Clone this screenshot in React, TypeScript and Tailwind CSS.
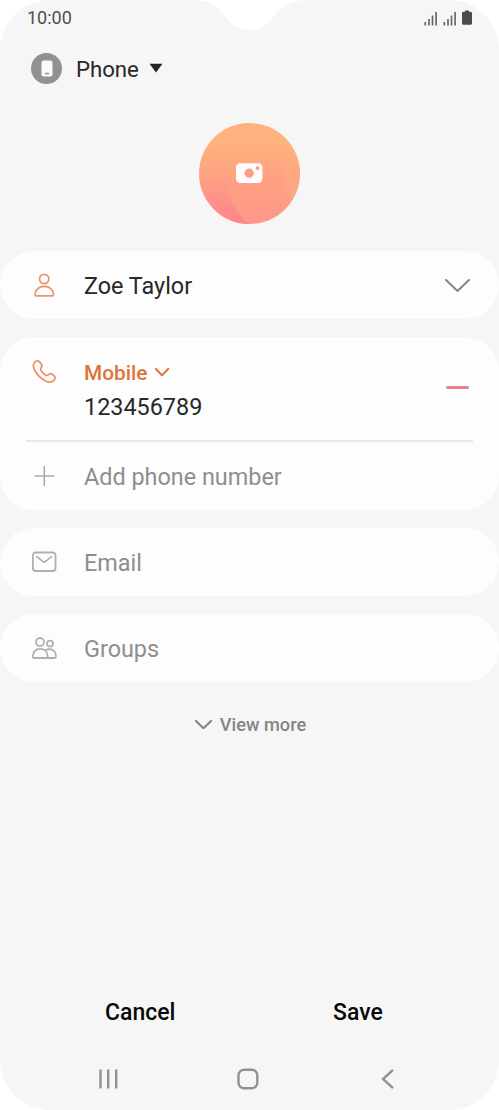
import React from "react";

interface IconProps {
  className?: string;
}

const SignalIcon = () => (
  <svg width="14" height="15" viewBox="0 0 14 15" fill="none" stroke="#606060" strokeWidth="1.6">
    <path d="M1.3 11v3.5M5 8v6.5M8.5 4.5v10M12.1 1v13.5" />
  </svg>
);

const BatteryIcon = () => (
  <svg className="mb-px" width="10" height="15" viewBox="0 0 10 15" fill="#4c4c4c">
    <path d="M3 0.5h4v1.3h1.5c.9 0 1.5.6 1.5 1.5v10c0 .9-.6 1.5-1.5 1.5h-7c-.9 0-1.5-.6-1.5-1.5v-10c0-.9.6-1.5 1.5-1.5H3z" />
  </svg>
);

// Round photo placeholder: soft gradient with two tinted lobes and a camera
const PhotoPlaceholder = () => (
  <svg width="101" height="101" viewBox="0 0 101 101">
    <defs>
      <linearGradient id="photoBase" x1="0" y1="0" x2="0" y2="1">
        <stop offset="0.2" stopColor="#feb27d" />
        <stop offset="0.6" stopColor="#fe9f83" />
        <stop offset="1" stopColor="#fe9789" />
      </linearGradient>
      <linearGradient id="photoPink" x1="0" y1="0" x2="0" y2="1">
        <stop offset="0.2" stopColor="#ff868d" stopOpacity="0" />
        <stop offset="1" stopColor="#ff808e" stopOpacity="0.8" />
      </linearGradient>
      <clipPath id="photoClip">
        <circle cx="50.5" cy="50.5" r="50.5" />
      </clipPath>
    </defs>
    <g clipPath="url(#photoClip)">
      <rect width="101" height="101" fill="url(#photoBase)" />
      <path d="M0 40h24C24 66 33 88 51 101H0z" fill="url(#photoPink)" />
      <path d="M85 28h16v52H91C83 63 83 46 85 28z" fill="#feb27d" fillOpacity="0.35" />
    </g>
    <rect x="37" y="40.3" width="26.4" height="19.6" rx="4.2" fill="#fdfdfd" />
    <circle cx="50.2" cy="50.2" r="4.6" fill="#fe9e83" />
    <circle cx="58.5" cy="45.2" r="1.9" fill="#fe9e83" />
  </svg>
);

const PersonIcon = () => (
  <svg width="28" height="28" viewBox="0 0 28 28" fill="none" stroke="#eb9469" strokeWidth="1.8">
    <circle cx="14.2" cy="8" r="4.6" />
    <path d="M5.1 23.7c0-5 4-8.300 9.200-8.300s9.200 3.300 9.200 8.300c0 .7-.4 1.100-1.100 1.100H6.200c-.7 0-1.100-.4-1.100-1.100z" />
  </svg>
);

const CallIcon = () => (
  <svg width="28" height="28" viewBox="0 0 28 28" fill="none" stroke="#eb9469" strokeWidth="1.8" strokeLinejoin="round">
    <path d="M4.700 4.200C6.200 2.500 8.200 2.400 9.500 3.900L11.300 6.100C12.300 7.500 12.100 8.500 11.200 9.500C10.200 10.700 10.200 11.500 11.100 12.700C12.300 14.300 13.700 15.700 15.300 16.900C16.500 17.700 17.400 17.600 18.500 16.600C19.700 15.500 20.900 15.200 22.200 16.200L24.200 17.900C25.500 19.100 25.400 20.700 24 22.200C21.900 24.500 18.600 24.700 15.100 22.800C11.100 20.600 7.400 17 5.100 13C3.100 9.500 2.900 6.400 4.700 4.200Z" />
  </svg>
);

const PlusIcon = () => (
  <svg width="28" height="28" viewBox="0 0 28 28" stroke="#aaaaad" strokeWidth="1.6" strokeLinecap="round">
    <path d="M14.3 4.7v18.6M5 14h18.6" />
  </svg>
);

const MailIcon = () => (
  <svg width="28" height="28" viewBox="0 0 28 28" fill="none" stroke="#b0b0b2" strokeWidth="1.8" strokeLinecap="round" strokeLinejoin="round">
    <rect x="2.9" y="4.5" width="22.6" height="18.5" rx="3" />
    <path d="M6.8 8.6l6.300 5q1.100.8 2.200 0l6.300-5" />
  </svg>
);

const GroupIcon = () => (
  <svg width="28" height="28" viewBox="0 0 28 28" fill="none" stroke="#b0b0b2" strokeWidth="1.8" strokeLinejoin="round">
    <circle cx="10" cy="8" r="4" />
    <circle cx="20" cy="9.6" r="3" />
    <path d="M2.800 22.600c0-4.600 2.800-7.700 7.300-7.700s7.600 3.100 7.600 7.700c0 .9-.4 1.400-1.200 1.400H4c-.8 0-1.200-.5-1.200-1.400z" />
    <path d="M15.500 16.300c1.200-.9 2.500-1.200 4-1.200 3.900 0 6.400 3 6.400 7.500 0 .9-.4 1.400-1.200 1.400h-8.200" />
  </svg>
);

const Chevron = ({ className }: IconProps) => (
  <svg className={className} viewBox="0 0 24 13" fill="none" stroke="currentColor" strokeLinecap="round" preserveAspectRatio="none">
    <path d="M1 1l11 11L23 1" vectorEffect="non-scaling-stroke" />
  </svg>
);

interface FieldProps {
  icon: React.ReactNode;
  label: string;
}

const PlaceholderField = ({ icon, label }: FieldProps) => (
  <div className="flex h-[68px] items-center rounded-[34px] bg-[#fdfdfd] pl-[30px]">
    {icon}
    <span className="ml-[26px] pt-0.5 text-[23.4px] leading-7 text-[#8e8e8e]">{label}</span>
  </div>
);

export default function App() {
  return (
    <div className="relative flex h-[1110px] w-[499px] flex-col overflow-hidden rounded-[50px] bg-[#f6f6f6] font-[Roboto,sans-serif] text-[#282828]">
      {/* Camera notch */}
      <svg className="absolute left-[190px] top-0" width="120" height="31" viewBox="0 0 120 31">
        <path d="M0 0C18 0 26 5 34 15C42 25 49 30 60 30C71 30 77 25 85 15C93 5 101 0 119 0Z" fill="#fff" />
      </svg>

      <header className="flex h-9 items-center justify-between pl-[27px] pr-[27px]">
        <span className="text-[18px] leading-5 text-[#505050]">10:00</span>
        <div className="flex items-center gap-[5px]">
          <SignalIcon />
          <SignalIcon />
          <BatteryIcon />
        </div>
      </header>

      <div className="flex h-[65px] items-center pl-[31px]">
        <div className="flex size-[31px] items-center justify-center rounded-full bg-[#919191]">
          <svg width="12" height="17" viewBox="0 0 12 17">
            <rect x="0.5" y="0.5" width="11" height="16" rx="2" fill="#fafafa" />
            <path d="M4 13.5h4" stroke="#919191" strokeWidth="1.3" />
          </svg>
        </div>
        <span className="ml-3.5 mt-px text-[22.2px] leading-7">Phone</span>
        <svg className="mb-px ml-2.5" width="14" height="10" viewBox="0 0 14 10">
          <path d="M0.5 0.8h13L7 9.5z" fill="#252525" />
        </svg>
      </div>

      <div className="mx-auto mt-[22px] size-[101px] shrink-0">
        <PhotoPlaceholder />
      </div>

      <main className="mt-[27px] flex flex-col gap-[18px]">
        <section className="flex h-[68px] items-center rounded-[34px] bg-[#fdfdfd] pl-[30px] pr-[29px]">
          <PersonIcon />
          <span className="ml-[26px] flex-1 pt-0.5 text-[23.4px] leading-7">Zoe Taylor</span>
          <Chevron className="h-[13px] w-[25px] stroke-2 text-[#858585]" />
        </section>

        <section className="h-[173px] rounded-[34px] bg-[#fdfdfd]">
          <div className="mx-[26px] flex h-[105px] border-b-2 border-[#e8e8e8] pl-1 pt-[21px]">
            <CallIcon />
            <div className="ml-[26px] flex-1">
              <div className="flex items-center text-[#e1733a]">
                <span className="text-[20.8px] font-medium leading-[30px]">Mobile</span>
                <Chevron className="mb-0.5 ml-2 h-[8px] w-[14px] stroke-2" />
              </div>
              <div className="mt-1 text-[23.4px] leading-[30px]">123456789</div>
            </div>
            <div className="mr-1 mt-[28px] h-[3px] w-[23px] rounded-full bg-[#e38589]" />
          </div>
          <div className="flex h-[68px] items-center pl-[30px]">
            <PlusIcon />
            <span className="ml-[26px] pt-0.5 text-[23.4px] leading-7 text-[#8e8e8e]">Add phone number</span>
          </div>
        </section>

        <PlaceholderField icon={<MailIcon />} label="Email" />
        <PlaceholderField icon={<GroupIcon />} label="Groups" />
      </main>

      <div className="mt-[29px] flex items-center justify-center pl-0.5 text-[#858585]">
        <Chevron className="mb-px h-[9px] w-[17px] stroke-2" />
        <span className="ml-2 text-[18.2px] font-medium leading-7">View more</span>
      </div>

      <footer className="mt-auto">
        <div className="flex text-[23px] font-medium leading-8 text-[#080808]">
          <div className="ml-[105px] w-[228px]">Cancel</div>
          <div>Save</div>
        </div>
        <nav className="flex h-[81px] items-center pl-[98px] pt-[18px] text-[#929292]">
          <svg width="20" height="22" viewBox="0 0 20 22" stroke="currentColor" strokeWidth="2.4">
            <path d="M2.5 1.5v19M10.2 1.5v19M18.2 1.5v19" />
          </svg>
          <svg className="ml-[118px]" width="24" height="22" viewBox="0 0 24 22" fill="none" stroke="currentColor" strokeWidth="2.4">
            <rect x="2.500" y="1.700" width="18.800" height="18.500" rx="5.500" />
          </svg>
          <svg className="ml-[121px]" width="14" height="22" viewBox="0 0 14 22" fill="none" stroke="currentColor" strokeWidth="2.4">
            <path d="M12 1.800L2 11l10 9.200" />
          </svg>
        </nav>
      </footer>
    </div>
  );
}
